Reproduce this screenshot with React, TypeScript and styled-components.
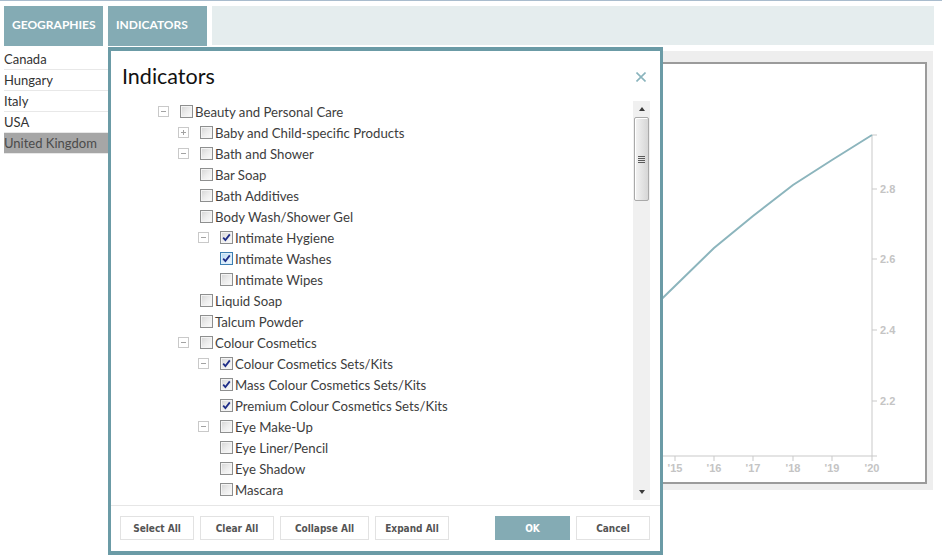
import React from 'react';
import styled, { createGlobalStyle } from 'styled-components';

const GlobalStyle = createGlobalStyle`
  html, body { margin: 0; padding: 0; background: #fff; }
  body { font-family: Lato, "Open Sans", sans-serif; }
  *, *::before, *::after { box-sizing: border-box; }
`;

const Page = styled.div`
  position: relative;
  width: 942px;
  height: 560px;
  border-top: 1px solid #a9bccd;
  padding-top: 5px;
  overflow: hidden;
`;

const TabBar = styled.div`
  display: flex;
  align-items: flex-start;
  gap: 5px;
  height: 40px;
  padding: 0 8px 0 4px;
`;

const Tab = styled.div`
  width: 99px;
  height: 40px;
  display: flex;
  align-items: center;
  padding: 0 0 3px 8px;
  background: #84abb4;
  color: #fff;
  font-family: Lato, sans-serif;
  font-weight: 700;
  font-size: 12px;
  text-transform: uppercase;
`;

const TabFiller = styled.div`
  flex: 1;
  height: 39px;
  background: #e5edee;
`;

const Body = styled.div`
  display: flex;
  gap: 4px;
  padding: 3px 9px 0 4px;
`;

const Sidebar = styled.ul`
  list-style: none;
  margin: 0;
  padding: 0;
  width: 104px;
  flex: none;
`;

const CountryRow = styled.li<{ $selected?: boolean }>`
  height: 21px;
  line-height: 20px;
  border-bottom: 1px solid #e8e8e8;
  font-size: 13px;
  color: ${(p) => (p.$selected ? '#4b4b4b' : '#333')};
  background: ${(p) => (p.$selected ? '#a6a6a6' : 'transparent')};
  white-space: nowrap;
`;

const ChartWrap = styled.div`
  flex: 1;
  margin-top: 2px;
  height: 439px;
  background: #eeeeee;
  padding: 11px 6px 6px 8px;
`;

const ChartPanel = styled.div`
  height: 100%;
  border: 2px solid #9b9b9b;
  background: #fff;
  overflow: hidden;
`;

const Dialog = styled.div`
  position: absolute;
  left: 108px;
  top: 46px;
  width: 555px;
  height: 508px;
  background: #fff;
  border: 3px solid #6b9ba6;
  border-top-width: 4px;
  border-bottom-width: 4px;
  display: flex;
  flex-direction: column;
`;

const DialogHeader = styled.div`
  height: 50px;
  flex: none;
  display: flex;
  align-items: center;
  justify-content: space-between;
  padding: 2px 14px 0 11px;
`;

const Title = styled.h2`
  margin: 0;
  font-family: Lato, sans-serif;
  font-weight: 400;
  font-size: 21.5px;
  line-height: 1;
  color: #111;
`;

const CloseButton = styled.button`
  border: 0;
  background: none;
  padding: 0;
  width: 10px;
  height: 10px;
  display: flex;
  cursor: pointer;
`;

const TreeArea = styled.div`
  flex: none;
  height: 399px;
  display: flex;
  padding-right: 10px;
`;

const TreeList = styled.ul`
  flex: 1;
  list-style: none;
  margin: 0;
  padding: 0;
  overflow: hidden;
`;

const TreeRow = styled.li<{ $indent: number }>`
  height: 21px;
  display: flex;
  align-items: center;
  padding-left: ${(p) => p.$indent}px;
  white-space: nowrap;
`;

const Expander = styled.span<{ $open: boolean }>`
  position: relative;
  flex: none;
  width: 11px;
  height: 11px;
  margin-right: 11px;
  border: 1px solid #c9c9c9;
  background: #fff;
  &::before {
    content: '';
    position: absolute;
    left: 2px;
    top: 4px;
    width: 5px;
    height: 1px;
    background: #a3a3a3;
  }
  &::after {
    content: '';
    position: absolute;
    left: 4px;
    top: 2px;
    width: 1px;
    height: 5px;
    background: #a3a3a3;
    display: ${(p) => (p.$open ? 'none' : 'block')};
  }
`;

const Box = styled.span<{ $hot?: boolean }>`
  flex: none;
  width: 13px;
  height: 13px;
  margin-right: 2px;
  display: flex;
  align-items: center;
  justify-content: center;
  border: 1px solid ${(p) => (p.$hot ? '#3d7fb3' : '#8e8f8f')};
  box-shadow: inset 0 0 0 1px ${(p) => (p.$hot ? '#deeefa' : '#f4f4f4')};
  background: ${(p) =>
    p.$hot
      ? 'linear-gradient(135deg, #b5d8f3 0%, #d9ecfa 55%, #f2f9fe 100%)'
      : 'linear-gradient(135deg, #d4d4d4 0%, #ececec 50%, #fcfcfc 100%)'};
`;

const Label = styled.span`
  font-family: Lato, sans-serif;
  font-size: 13.2px;
  color: #3d3d3d;
`;

const Scrollbar = styled.div`
  flex: none;
  width: 17px;
  height: 100%;
  background: #f0f0f0;
  display: flex;
  flex-direction: column;
`;

const ScrollButton = styled.div<{ $down?: boolean }>`
  height: 16px;
  flex: none;
  display: flex;
  align-items: center;
  justify-content: center;
  &::before {
    content: '';
    width: 0;
    height: 0;
    border-left: 3.5px solid transparent;
    border-right: 3.5px solid transparent;
    ${(p) => (p.$down ? 'border-top: 4px solid #3a3a3a;' : 'border-bottom: 4px solid #3a3a3a;')}
  }
`;

const Thumb = styled.div`
  flex: none;
  height: 84px;
  margin: 0 1px;
  border: 1px solid #a9a9a9;
  border-radius: 2px;
  background: linear-gradient(90deg, #f4f4f4 0%, #e6e6e6 45%, #d6d6d6 100%);
  box-shadow: inset 1px 1px 0 #fff;
  display: flex;
  flex-direction: column;
  align-items: center;
  justify-content: center;
  gap: 1px;
`;

const Grip = styled.span`
  width: 7px;
  height: 1px;
  background: #5a5a5a;
`;

const ScrollSpace = styled.div`
  flex: 1;
`;

const Footer = styled.div`
  margin-top: 5px;
  border-top: 1px solid #e6e6e6;
  padding: 10px 10px 10px 9px;
  display: flex;
  gap: 6px;
`;

const Button = styled.button<{ $w: number; $primary?: boolean; $push?: boolean }>`
  width: ${(p) => p.$w}px;
  height: 24px;
  padding: 0;
  margin-left: ${(p) => (p.$push ? 'auto' : '0')};
  border: 1px solid ${(p) => (p.$primary ? '#84abb4' : '#e2e2e2')};
  background: ${(p) => (p.$primary ? '#84abb4' : '#fff')};
  color: ${(p) => (p.$primary ? '#fff' : '#545454')};
  font-family: "DejaVu Sans Condensed", "DejaVu Sans", sans-serif;
  font-stretch: condensed;
  font-weight: 700;
  font-size: 10px;
  white-space: nowrap;
  cursor: pointer;
`;

type Row = { label: string; level: number; exp?: 'open' | 'closed'; checked?: boolean; hot?: boolean };

const rows: Row[] = [
  { label: 'Beauty and Personal Care', level: 0, exp: 'open' },
  { label: 'Baby and Child-specific Products', level: 1, exp: 'closed' },
  { label: 'Bath and Shower', level: 1, exp: 'open' },
  { label: 'Bar Soap', level: 2 },
  { label: 'Bath Additives', level: 2 },
  { label: 'Body Wash/Shower Gel', level: 2 },
  { label: 'Intimate Hygiene', level: 2, exp: 'open', checked: true },
  { label: 'Intimate Washes', level: 3, checked: true, hot: true },
  { label: 'Intimate Wipes', level: 3 },
  { label: 'Liquid Soap', level: 2 },
  { label: 'Talcum Powder', level: 2 },
  { label: 'Colour Cosmetics', level: 1, exp: 'open' },
  { label: 'Colour Cosmetics Sets/Kits', level: 2, exp: 'open', checked: true },
  { label: 'Mass Colour Cosmetics Sets/Kits', level: 3, checked: true },
  { label: 'Premium Colour Cosmetics Sets/Kits', level: 3, checked: true },
  { label: 'Eye Make-Up', level: 2, exp: 'open' },
  { label: 'Eye Liner/Pencil', level: 3 },
  { label: 'Eye Shadow', level: 3 },
  { label: 'Mascara', level: 3 },
  { label: 'Other Eye Make-Up', level: 3 },
  { label: 'Facial Make-Up', level: 2, exp: 'closed' },
];

const countries = ['Canada', 'Hungary', 'Italy', 'USA', 'United Kingdom'];

const Check = () => (
  <svg width="9" height="9" viewBox="0 0 9 9">
    <path d="M1.2 4.6 L3.4 7 L7.8 1.4" fill="none" stroke="#1e2d88" strokeWidth="1.8" />
  </svg>
);

const axis = '#c9c9c9';
const label = '#c4c4c4';
const yTicks = [
  { y: 125, t: '2.8' },
  { y: 195, t: '2.6' },
  { y: 266, t: '2.4' },
  { y: 337, t: '2.2' },
];
const xTicks = [
  { x: 514, t: "'14" },
  { x: 553, t: "'15" },
  { x: 592, t: "'16" },
  { x: 631, t: "'17" },
  { x: 671, t: "'18" },
  { x: 710, t: "'19" },
  { x: 750, t: "'20" },
];
const points = '475,298 514,260 553,222 592,184 631,152 671,121 710,96 750,71';

const Chart = () => (
  <svg width="803" height="418" viewBox="0 0 803 418">
    <line x1="750" y1="71" x2="750" y2="392" stroke={axis} strokeWidth="1" />
    <line x1="400" y1="392" x2="755" y2="392" stroke={axis} strokeWidth="1" />
    <line x1="750" y1="71" x2="755" y2="71" stroke={axis} strokeWidth="1" />
    {yTicks.map((k) => (
      <g key={k.t}>
        <line x1="750" y1={k.y} x2="755" y2={k.y} stroke={axis} strokeWidth="1" />
        <text x="758" y={k.y + 4} fontFamily="'Liberation Sans', Arial, sans-serif" fontWeight="700" fontSize="11" fill={label}>
          {k.t}
        </text>
      </g>
    ))}
    {xTicks.map((k) => (
      <g key={k.t}>
        <line x1={k.x} y1="392" x2={k.x} y2="397" stroke={axis} strokeWidth="1" />
        <text x={k.x} y="408" textAnchor="middle" fontFamily="'Liberation Sans', Arial, sans-serif" fontWeight="700" fontSize="11" fill={label}>
          {k.t}
        </text>
      </g>
    ))}
    <polyline points={points} fill="none" stroke="#8cb5bd" strokeWidth="2" />
  </svg>
);

export default function App() {
  return (
    <>
      <GlobalStyle />
      <Page>
        <TabBar>
          <Tab>Geographies</Tab>
          <Tab>Indicators</Tab>
          <TabFiller />
        </TabBar>
        <Body>
          <Sidebar>
            {countries.map((c) => (
              <CountryRow key={c} $selected={c === 'United Kingdom'}>
                {c}
              </CountryRow>
            ))}
          </Sidebar>
          <ChartWrap>
            <ChartPanel>
              <Chart />
            </ChartPanel>
          </ChartWrap>
        </Body>

        <Dialog>
          <DialogHeader>
            <Title>Indicators</Title>
            <CloseButton aria-label="Close">
              <svg width="10" height="10" viewBox="0 0 10 10">
                <path d="M0.5 0.5 L9.5 9.5 M9.5 0.5 L0.5 9.5" stroke="#8ab4bd" strokeWidth="1.6" />
              </svg>
            </CloseButton>
          </DialogHeader>
          <TreeArea>
            <TreeList>
              {rows.map((r, i) => (
                <TreeRow key={i} $indent={r.exp ? 47 + 20 * r.level : 49 + 20 * r.level}>
                  {r.exp && <Expander $open={r.exp === 'open'} />}
                  <Box $hot={r.hot}>{r.checked && <Check />}</Box>
                  <Label>{r.label}</Label>
                </TreeRow>
              ))}
            </TreeList>
            <Scrollbar>
              <ScrollButton />
              <Thumb>
                <Grip />
                <Grip />
                <Grip />
                <Grip />
              </Thumb>
              <ScrollSpace />
              <ScrollButton $down />
            </Scrollbar>
          </TreeArea>
          <Footer>
            <Button $w={74}>Select All</Button>
            <Button $w={74}>Clear All</Button>
            <Button $w={89}>Collapse All</Button>
            <Button $w={74}>Expand All</Button>
            <Button $w={75} $primary $push>
              OK
            </Button>
            <Button $w={74}>Cancel</Button>
          </Footer>
        </Dialog>
      </Page>
    </>
  );
}
